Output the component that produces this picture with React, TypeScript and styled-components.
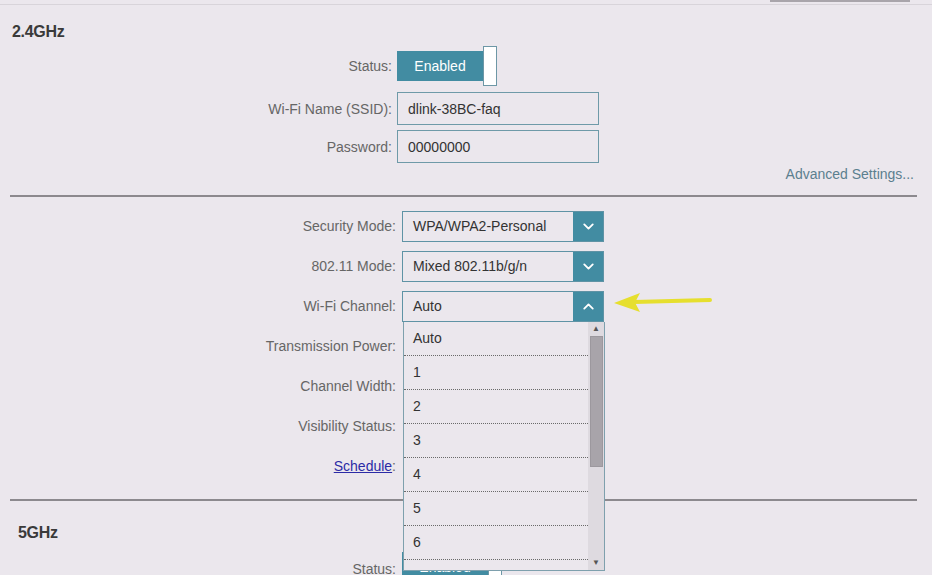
import styled, { createGlobalStyle } from 'styled-components';
import { ChevronDown, ChevronUp } from 'lucide-react';

const GlobalStyle = createGlobalStyle`
  html, body { margin: 0; padding: 0; background: #ffffff; }
  body { font-family: "Liberation Sans", Arial, sans-serif; }
`;

const channels = ['Auto', '1', '2', '3', '4', '5', '6'];

export default function App() {
  return (
    <>
      <GlobalStyle />
      <Page>
        <TopEdge>
          <TopTab />
        </TopEdge>

        <Band $indent={12} $mt={17}>2.4GHz</Band>

        <Row $label={392} $h={40} $mt={4}>
          <Label>Status:</Label>
          <Toggle>
            <ToggleFace>Enabled</ToggleFace>
            <Knob />
          </Toggle>
        </Row>
        <Row $label={392} $h={33} $mt={6}>
          <Label>Wi-Fi Name (SSID):</Label>
          <Input>dlink-38BC-faq</Input>
        </Row>
        <Row $label={392} $h={33} $mt={5}>
          <Label>Password:</Label>
          <Input>00000000</Input>
        </Row>

        <Advanced>Advanced Settings...</Advanced>
        <Divider $mt={12} />

        <Form>
          <Row $label={396} $h={40}>
            <Label>Security Mode:</Label>
            <Select value="WPA/WPA2-Personal" />
          </Row>
          <Row $label={396} $h={40}>
            <Label>802.11 Mode:</Label>
            <Select value="Mixed 802.11b/g/n" />
          </Row>
          <Row $label={396} $h={40}>
            <Label>Wi-Fi Channel:</Label>
            <SelectWrap>
              <Select value="Auto" open />
              <List>
                <Options>
                  {channels.map((c) => (
                    <Option key={c}>{c}</Option>
                  ))}
                </Options>
                <Scrollbar>
                  <ScrollArrow>▲</ScrollArrow>
                  <Thumb />
                  <Track />
                  <ScrollArrow>▼</ScrollArrow>
                </Scrollbar>
              </List>
              <Arrow viewBox="0 0 110 24" aria-hidden="true">
                <path d="M22 11 L98 9" stroke="#e6df2e" strokeWidth="4" strokeLinecap="round" />
                <path d="M2 12 L28 2 L23 11.5 L28 21 Z" fill="#e6df2e" />
              </Arrow>
            </SelectWrap>
          </Row>
          <Row $label={396} $h={40}>
            <Label>Transmission Power:</Label>
          </Row>
          <Row $label={396} $h={40}>
            <Label>Channel Width:</Label>
          </Row>
          <Row $label={396} $h={40}>
            <Label>Visibility Status:</Label>
          </Row>
          <Row $label={396} $h={40}>
            <Label><Link>Schedule</Link>:</Label>
          </Row>
        </Form>

        <Divider $mt={13} />
        <Band $indent={18} $mt={22}>5GHz</Band>

        <Row $label={396} $h={30} $mt={3}>
          <Label>Status:</Label>
          <Toggle $low>
            <ToggleFace>Enabled</ToggleFace>
            <Knob />
          </Toggle>
        </Row>
      </Page>
    </>
  );
}

function Select({ value, open }: { value: string; open?: boolean }) {
  return (
    <SelectBox>
      <SelectText>{value}</SelectText>
      <SelectBtn>
        {open ? <ChevronUp size={17} strokeWidth={2.6} /> : <ChevronDown size={17} strokeWidth={2.6} />}
      </SelectBtn>
    </SelectBox>
  );
}

const Page = styled.div`
  position: relative;
  width: 932px; height: 575px; overflow: hidden;
  background: #ebe7ed;
  color: #333;
  font-size: 14px;
`;
const TopEdge = styled.div`
  height: 4px;
  border-bottom: 1px solid #d8d4da;
  display: flex; justify-content: flex-end;
  padding-right: 22px;
`;
const TopTab = styled.div`
  width: 140px; height: 2px; background: #a9a5ab;
`;
const Band = styled.div<{ $indent: number; $mt: number }>`
  margin-top: ${(p) => p.$mt}px;
  padding-left: ${(p) => p.$indent}px;
  height: 20px; line-height: 20px;
  font-size: 16px; font-weight: 700; color: #3a3a3a;
  letter-spacing: -0.3px;
`;
const Row = styled.div<{ $label: number; $h: number; $mt?: number }>`
  display: grid;
  grid-template-columns: ${(p) => p.$label}px 1fr;
  column-gap: ${(p) => (p.$label === 396 ? 6 : 5)}px;
  align-items: center;
  height: ${(p) => p.$h}px;
  margin-top: ${(p) => p.$mt ?? 0}px;
`;
const Label = styled.div`
  text-align: right;
  color: #666;
  font-size: 14px;
  white-space: nowrap;
`;
const Link = styled.span`
  color: #2b2ba6;
  text-decoration: underline;
`;
const Toggle = styled.div<{ $low?: boolean }>`
  display: flex; align-items: center;
  width: 100px; height: 40px;
  ${(p) => p.$low && 'align-self: start; margin-top: 6px; align-items: flex-start;'}
`;
const ToggleFace = styled.div`
  width: 86px; height: 30px;
  background: #428ca2;
  color: #fff; font-size: 14px;
  display: flex; align-items: center; justify-content: center;
`;
const Knob = styled.div`
  width: 12px; height: 38px;
  background: #fff;
  border: 1px solid #6d97a6;
`;
const Input = styled.div`
  width: 190px; height: 31px;
  border: 1px solid #6e9aa8;
  background: #ebe7ed;
  padding-left: 10px;
  display: flex; align-items: center;
  color: #333;
`;
const Advanced = styled.div`
  margin-top: 2px;
  height: 18px; line-height: 18px;
  text-align: right;
  padding-right: 18px;
  color: #5b7f8f;
  font-size: 14px;
`;
const Divider = styled.div<{ $mt: number }>`
  margin: ${(p) => p.$mt}px 15px 0 10px;
  height: 2px;
  background: #8c898e;
`;
const Form = styled.div`
  padding-top: 9px;
`;
const SelectWrap = styled.div`
  position: relative;
  width: 202px;
`;
const SelectBox = styled.div`
  display: flex;
  width: 202px; height: 31px;
  box-sizing: border-box;
  border: 1px solid #5f93a5;
  background: #ebe7ed;
`;
const SelectText = styled.div`
  flex: 1;
  display: flex; align-items: center;
  padding-left: 10px;
  color: #333; font-size: 14px;
`;
const SelectBtn = styled.div`
  width: 30px;
  background: #428ca2;
  color: #fff;
  display: flex; align-items: center; justify-content: center;
`;
const List = styled.div`
  position: absolute;
  top: 31px; left: 1px;
  width: 202px; height: 249px;
  box-sizing: border-box;
  border: 1px solid #7ea0ad;
  border-top: none;
  background: #ebe7ed;
  display: flex;
  z-index: 2;
`;
const Options = styled.div`
  flex: 1;
  display: flex; flex-direction: column;
`;
const Option = styled.div`
  height: 34px;
  flex-shrink: 0;
  box-sizing: border-box;
  border-bottom: 1px dotted #6a6a6a;
  padding-left: 9px;
  display: flex; align-items: center;
  color: #333; font-size: 14px;
`;
const Scrollbar = styled.div`
  width: 16px;
  background: #dedae0;
  display: flex; flex-direction: column; align-items: center;
`;
const ScrollArrow = styled.div`
  height: 14px;
  font-size: 8px; line-height: 14px;
  color: #555;
`;
const Thumb = styled.div`
  width: 13px; height: 131px;
  background: #a8a4aa;
  border: 1px solid #9c989e;
  box-sizing: border-box;
`;
const Track = styled.div`flex: 1;`;
const Arrow = styled.svg`
  position: absolute;
  left: 210px; top: 0px;
  width: 110px; height: 24px;
  filter: blur(0.4px);
`;
